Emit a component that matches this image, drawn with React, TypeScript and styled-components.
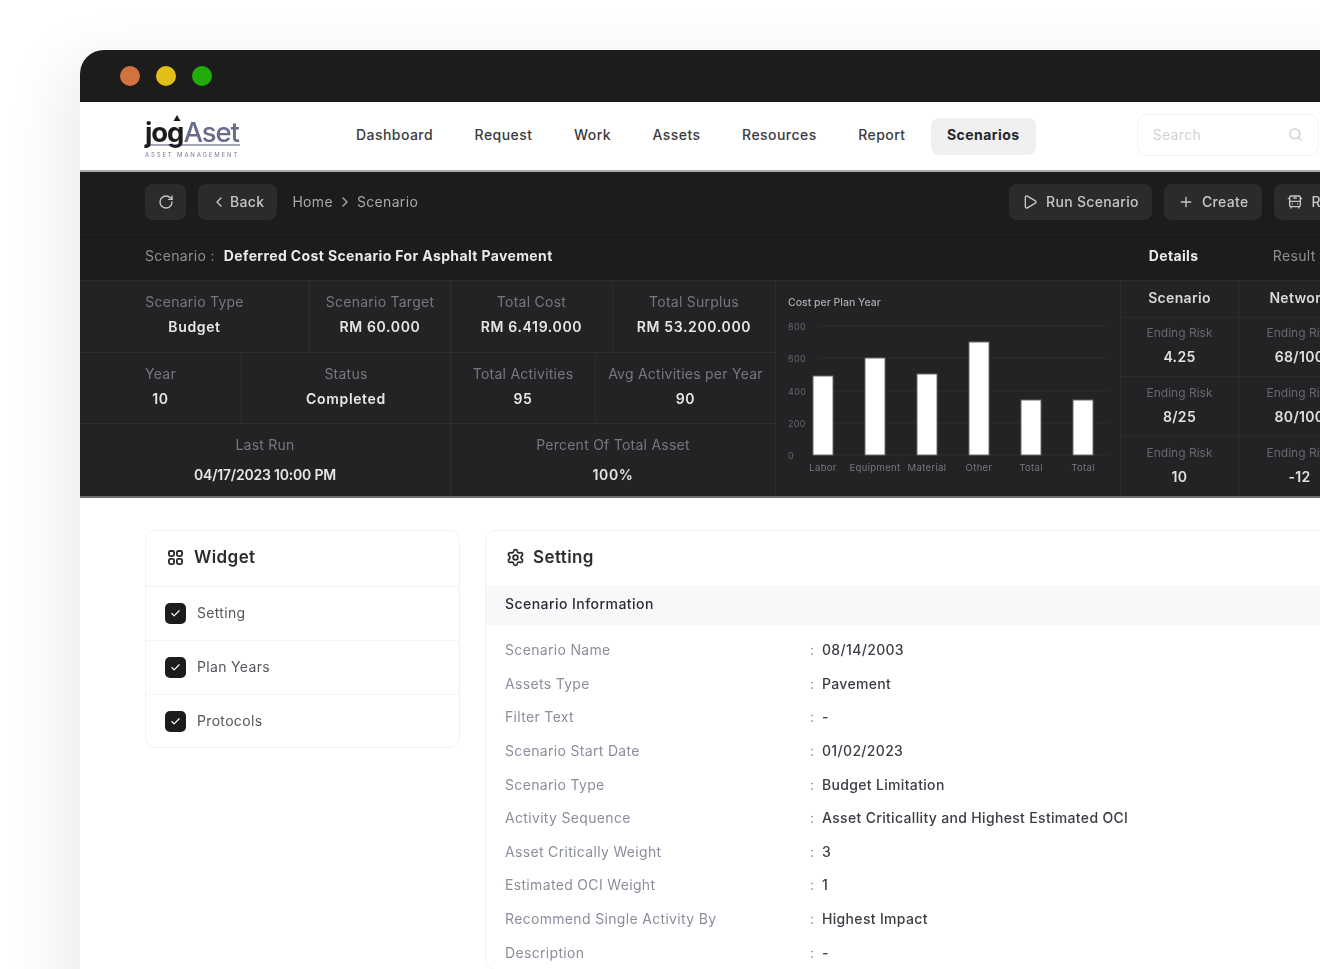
import React from "react";
import styled, { createGlobalStyle } from "styled-components";
import { RotateCw, ChevronLeft, ChevronRight, Play, Plus, Search, Settings, Check, BusFront } from "lucide-react";

const Global = createGlobalStyle`
  html, body { margin: 0; padding: 0; height: 100%; background: #fff; overflow: hidden; }
  body { font-family: Inter, "Noto Sans", sans-serif; letter-spacing: 0.33px; }
  * { box-sizing: border-box; }
`;
const Page = styled.div`
  width: 1320px; height: 969px; overflow: hidden; padding: 50px 0 0 80px; background: #fff;
`;
const Window = styled.div`
  width: 1400px; height: 1100px; border-radius: 24px 24px 0 0; background: #fff;
  box-shadow: -20px 10px 60px rgba(20, 20, 30, 0.07); overflow: hidden;
  filter: blur(0.45px);
`;
const TitleBar = styled.div`
  height: 52px; background: #1c1c1c; display: flex; align-items: center; gap: 16px; padding-left: 40px;
`;
const Dot = styled.span<{ $c: string }>`
  width: 20px; height: 20px; border-radius: 50%; background: ${p => p.$c};
`;
const Nav = styled.div`
  height: 70px; background: #fff; display: flex; align-items: center; padding-left: 65px;
  border-bottom: 2px solid #a9a9a9;
`;
const Logo = styled.div`
  width: 95px; flex: none; margin-right: 100px; display: flex; flex-direction: column; position: relative; top: 2px;
`;
const LogoMark = styled.div`
  display: flex; align-items: baseline; height: 28px; line-height: 28px; border-bottom: 2px solid #a2a7b9;
  font-size: 27.5px; letter-spacing: -1.1px; white-space: nowrap; position: relative;
`;
const LogoArrow = styled.svg`
  position: absolute; left: 28px; top: -3px;
`;
const LogoJog = styled.span` font-weight: 700; color: #1c1c1c; `;
const LogoAset = styled.span` font-weight: 500; color: #666d8a; `;
const LogoSub = styled.div`
  font-size: 6px; letter-spacing: 1.85px; color: #7a8096; margin-top: 5px; white-space: nowrap; line-height: 8px;
`;
const NavItems = styled.div` display: flex; gap: 9.5px; align-items: center; flex: none; `;
const NavItem = styled.div<{ $active?: boolean }>`
  height: 37px; padding: 0 16px 3px; border-radius: 8px; display: flex; align-items: center; letter-spacing: 0.45px;
  font-size: 14px; font-weight: ${p => p.$active ? 700 : 500}; color: ${p => p.$active ? "#26262a" : "#3b3b40"};
  background: ${p => p.$active ? "#f0f0f0" : "transparent"};
`;
const SearchBox = styled.div`
  margin-left: 101px; width: 182px; flex: none; height: 42px; border: 1px solid #f2f2f4; border-radius: 10px;
  display: flex; align-items: center; justify-content: space-between; padding: 0 15px 2px;
  font-size: 14px; color: #d0d1d8; position: relative; top: -1px;
`;
const Toolbar = styled.div`
  height: 63px; background: #1c1c1c; display: flex; align-items: center; padding: 0 0 3px 65px;
  border-bottom: 1px solid #232325;
`;
const TButton = styled.div<{ $square?: boolean; $gap?: number; $pad?: number }>`
  height: 36px; flex: none; border-radius: 8px; background: #2b2b2c; color: #c7c7c9; display: flex; align-items: center;
  justify-content: center; gap: ${p => p.$gap ?? 8}px; font-size: 14px; font-weight: 500; white-space: nowrap;
  padding: 0 ${p => p.$square ? 0 : p.$pad ?? 13}px; ${p => p.$square ? "width: 41px;" : ""}
`;
const Crumbs = styled.div`
  display: flex; align-items: center; gap: 4px; margin-left: 3px; font-size: 14px; color: #a9a9ab; flex: none;
`;
const ToolRight = styled.div`
  margin-left: 588px; display: flex; gap: 12px; flex: none;
`;
const LeftGroup = styled.div` display: flex; gap: 12px; width: 276px; flex: none; `;
const TitleRow = styled.div`
  height: 45px; background: #1c1c1c; display: flex; align-items: center; padding: 0 0 4px 65px; font-size: 14px;
`;
const TitleLabel = styled.span` color: #8f8f91; margin-right: 9px; `;
const TitleValue = styled.span` color: #e9e9ea; font-weight: 700; width: 925px; white-space: nowrap; letter-spacing: 0.37px; `;
const TabOn = styled.span` color: #e9e9ea; font-weight: 700; width: 124px; `;
const TabOff = styled.span` color: #8f8f91; `;
const Stats = styled.div`
  height: 218px; background: #222325; display: flex; border-bottom: 2px solid #6d6d6f; border-top: 1px solid #2a2b2d;
`;
const LeftStats = styled.div`
  width: 696px; flex: none; display: flex; flex-direction: column; border-right: 1px solid #2d2e30;
`;
const StatRow = styled.div`
  display: flex; height: 72px; border-bottom: 1px solid #2d2e30; &:last-child { border-bottom: 0; }
`;
const StatCell = styled.div<{ $w: number; $low?: boolean }>`
  width: ${p => p.$w}px; flex: none; display: flex; flex-direction: column; align-items: center; justify-content: center;
  gap: 7px; border-right: 1px solid #2d2e30; &:last-child { border-right: 0; } padding-bottom: ${p => p.$low ? 1 : 3}px;
`;
const StatLabel = styled.div` font-size: 14px; color: #77787b; white-space: nowrap; line-height: 18px; letter-spacing: 0.25px; `;
const StatValue = styled.div<{ $large?: boolean; $tight?: boolean }>`
  font-size: 14px; color: #e6e6e7; font-weight: 600; line-height: 18px; white-space: nowrap;
  letter-spacing: ${p => p.$tight ? "-0.2px" : "0.65px"};
  ${p => p.$large ? "margin-top: 5px;" : ""}
`;
const ChartPane = styled.div` width: 345px; flex: none; border-right: 1px solid #2d2e30; `;
const ChartSvg = styled.svg` display: block; `;
const ChartTitle = styled.text` letter-spacing: 0; `;
const Side = styled.div` display: flex; flex: none; `;
const SideCol = styled.div<{ $w: number }>`
  width: ${p => p.$w}px; flex: none; border-right: 1px solid #2d2e30; display: flex; flex-direction: column;
`;
const SideHead = styled.div`
  height: 37px; display: flex; align-items: center; justify-content: center; color: #d8d8d9; font-size: 14px; font-weight: 600;
  border-bottom: 1px solid #2a2b2d; padding-bottom: 3px;
`;
const SideCell = styled.div`
  height: 60px; display: flex; flex-direction: column; align-items: center; justify-content: center; gap: 7px;
  border-bottom: 1px solid #2a2b2d; padding-bottom: 2px; &:last-child { border-bottom: 0; }
`;
const SideLabel = styled.div` font-size: 12px; color: #67686b; line-height: 16px; white-space: nowrap; letter-spacing: 0; `;
const SideValue = styled.div` font-size: 14px; color: #e0e0e1; font-weight: 600; line-height: 18px; white-space: nowrap; `;
const Body = styled.div`
  display: flex; align-items: flex-start; gap: 25px; padding: 32px 0 0 65px; background: #fff;
`;
const Card = styled.div<{ $w: number }>`
  width: ${p => p.$w}px; flex: none; border: 1px solid #f1f2f4; border-radius: 10px; background: #fff; overflow: hidden;
`;
const CardHead = styled.div<{ $gap: number; $pad: number }>`
  height: 56px; display: flex; align-items: center; gap: ${p => p.$gap}px; padding: 0 0 3px ${p => p.$pad}px; font-size: 17px; font-weight: 600; letter-spacing: 0.4px;
  color: #2c2c30; border-bottom: 1px solid #f1f2f4;
`;
const WidgetRow = styled.div`
  height: 54px; display: flex; align-items: center; gap: 11px; padding: 0 0 2px 19px; font-size: 14px; color: #55565c;
  border-bottom: 1px solid #f3f4f6; &:last-child { border-bottom: 0; height: 52px; }
`;
const Box = styled.div`
  width: 21px; height: 21px; border-radius: 5px; background: #1c1c1e; display: flex; align-items: center; justify-content: center;
  color: #fff; position: relative; top: 1px;
`;
const SectionBar = styled.div`
  height: 38px; background: #f7f8f9; display: flex; align-items: center; padding: 0 0 5px 19px; font-size: 14px; font-weight: 500; color: #2c2c30; letter-spacing: 0.45px;
`;
const Rows = styled.div` padding: 8px 0 0 19px; `;
const InfoRow = styled.div`
  height: 33.6px; display: flex; align-items: center; font-size: 14px;
`;
const InfoLabel = styled.div` width: 305px; flex: none; color: #8b8e9b; `;
const InfoSep = styled.div` width: 12px; flex: none; color: #8b8e9b; `;
const InfoValue = styled.div` color: #3c3d44; font-weight: 500; white-space: nowrap; `;

const bars = [
  { label: "Labor", x: 813, top: 376 }, { label: "Equipment", x: 865, top: 358 }, { label: "Material", x: 917, top: 374 },
  { label: "Other", x: 969, top: 342 }, { label: "Total", x: 1021, top: 400 }, { label: "Total", x: 1073, top: 400 },
];
const ticks = [{ t: "800", y: 326 }, { t: "600", y: 358 }, { t: "400", y: 391 }, { t: "200", y: 423 }, { t: "0", y: 455 }];
const info = [
  ["Scenario Name", "08/14/2003"], ["Assets Type", "Pavement"], ["Filter Text", "-"], ["Scenario Start Date", "01/02/2023"],
  ["Scenario Type", "Budget Limitation"], ["Activity Sequence", "Asset Criticallity and Highest Estimated OCI"],
  ["Asset Critically Weight", "3"], ["Estimated OCI Weight", "1"], ["Recommend Single Activity By", "Highest Impact"], ["Description", "-"],
];
const GridIcon = () => (
  <svg width="15" height="15" viewBox="0 0 16 16" fill="none" stroke="#2c2c30" strokeWidth="2">
    <rect x="1" y="1" width="5.5" height="5.5" rx="1.6" /><rect x="9.5" y="1" width="5.5" height="5.5" rx="1.6" />
    <rect x="1" y="9.5" width="5.5" height="5.5" rx="1.6" /><rect x="9.5" y="9.5" width="5.5" height="5.5" rx="1.6" />
  </svg>
);

export default function App() {
  return (
    <Page>
      <Global />
      <Window>
        <TitleBar><Dot $c="#d2733f" /><Dot $c="#e2bf17" /><Dot $c="#22ac0a" /></TitleBar>
        <Nav>
          <Logo>
            <LogoMark>
              <LogoArrow width="8" height="8" viewBox="0 0 8 8"><path d="M4 0 L7.5 6 H0.5 Z" fill="#1c1c1c" /></LogoArrow>
              <LogoJog>jog</LogoJog><LogoAset>Aset</LogoAset>
            </LogoMark>
            <LogoSub>ASSET MANAGEMENT</LogoSub>
          </Logo>
          <NavItems>
            {["Dashboard", "Request", "Work", "Assets", "Resources", "Report"].map(n => <NavItem key={n}>{n}</NavItem>)}
            <NavItem $active>Scenarios</NavItem>
          </NavItems>
          <SearchBox>Search<Search size={15} color="#c8c9d0" /></SearchBox>
        </Nav>
        <Toolbar>
          <LeftGroup>
            <TButton $square><RotateCw size={16} /></TButton>
            <TButton $gap={3}><ChevronLeft size={16} />Back</TButton>
            <Crumbs>Home<ChevronRight size={16} />Scenario</Crumbs>
          </LeftGroup>
          <ToolRight>
            <TButton><Play size={16} />Run Scenario</TButton>
            <TButton $pad={14}><Plus size={16} />Create</TButton>
            <TButton><BusFront size={16} />Report</TButton>
          </ToolRight>
        </Toolbar>
        <TitleRow>
          <TitleLabel>Scenario :</TitleLabel>
          <TitleValue>Deferred Cost Scenario For Asphalt Pavement</TitleValue>
          <TabOn>Details</TabOn><TabOff>Result</TabOff>
        </TitleRow>
        <Stats>
          <LeftStats>
            <StatRow>
              <StatCell $w={230}><StatLabel>Scenario Type</StatLabel><StatValue>Budget</StatValue></StatCell>
              <StatCell $w={141}><StatLabel>Scenario Target</StatLabel><StatValue>RM 60.000</StatValue></StatCell>
              <StatCell $w={162}><StatLabel>Total Cost</StatLabel><StatValue>RM 6.419.000</StatValue></StatCell>
              <StatCell $w={162}><StatLabel>Total Surplus</StatLabel><StatValue>RM 53.200.000</StatValue></StatCell>
            </StatRow>
            <StatRow>
              <StatCell $w={162}><StatLabel>Year</StatLabel><StatValue>10</StatValue></StatCell>
              <StatCell $w={209}><StatLabel>Status</StatLabel><StatValue>Completed</StatValue></StatCell>
              <StatCell $w={145}><StatLabel>Total Activities</StatLabel><StatValue>95</StatValue></StatCell>
              <StatCell $w={179}><StatLabel>Avg Activities per Year</StatLabel><StatValue>90</StatValue></StatCell>
            </StatRow>
            <StatRow>
              <StatCell $w={371} $low><StatLabel>Last Run</StatLabel><StatValue $large $tight>04/17/2023 10:00 PM</StatValue></StatCell>
              <StatCell $w={324} $low><StatLabel>Percent Of Total Asset</StatLabel><StatValue $large>100%</StatValue></StatCell>
            </StatRow>
          </LeftStats>
          <ChartPane>
            <ChartSvg width="344" height="215" viewBox="776 281 344 215" fontFamily="Inter, sans-serif">
              <ChartTitle x="788" y="306" fontSize="10.5" fill="#a9aaac" fontWeight="500">Cost per Plan Year</ChartTitle>
              {ticks.map(t => (
                <g key={t.t}>
                  <line x1="819" x2="1108" y1={t.y} y2={t.y} stroke="#2e2f31" />
                  <text x="788" y={t.y + 4} fontSize="9" fill="#66676a">{t.t}</text>
                </g>
              ))}
              {bars.map((b, i) => (
                <g key={i}>
                  <rect x={b.x} y={b.top} width="20" height={455 - b.top} fill="#fff" stroke="#6a6a6c" strokeWidth="1" />
                  <text x={b.x + 10} y="471" fontSize="9.5" fill="#77787b" textAnchor="middle">{b.label}</text>
                </g>
              ))}
            </ChartSvg>
          </ChartPane>
          <Side>
            <SideCol $w={118}>
              <SideHead>Scenario</SideHead>
              <SideCell><SideLabel>Ending Risk</SideLabel><SideValue>4.25</SideValue></SideCell>
              <SideCell><SideLabel>Ending Risk</SideLabel><SideValue>8/25</SideValue></SideCell>
              <SideCell><SideLabel>Ending Risk</SideLabel><SideValue>10</SideValue></SideCell>
            </SideCol>
            <SideCol $w={122}>
              <SideHead>Network</SideHead>
              <SideCell><SideLabel>Ending Risk</SideLabel><SideValue>68/100</SideValue></SideCell>
              <SideCell><SideLabel>Ending Risk</SideLabel><SideValue>80/100</SideValue></SideCell>
              <SideCell><SideLabel>Ending Risk</SideLabel><SideValue>-12</SideValue></SideCell>
            </SideCol>
          </Side>
        </Stats>
        <Body>
          <Card $w={315}>
            <CardHead $gap={11} $pad={22}><GridIcon />Widget</CardHead>
            {["Setting", "Plan Years", "Protocols"].map(n => (
              <WidgetRow key={n}><Box><Check size={11} strokeWidth={2.5} /></Box>{n}</WidgetRow>
            ))}
          </Card>
          <Card $w={900}>
            <CardHead $gap={8} $pad={20}><Settings size={19} strokeWidth={2.2} />Setting</CardHead>
            <SectionBar>Scenario Information</SectionBar>
            <Rows>
              {info.map(([k, v]) => (
                <InfoRow key={k}><InfoLabel>{k}</InfoLabel><InfoSep>:</InfoSep><InfoValue>{v}</InfoValue></InfoRow>
              ))}
            </Rows>
          </Card>
        </Body>
      </Window>
    </Page>
  );
}
